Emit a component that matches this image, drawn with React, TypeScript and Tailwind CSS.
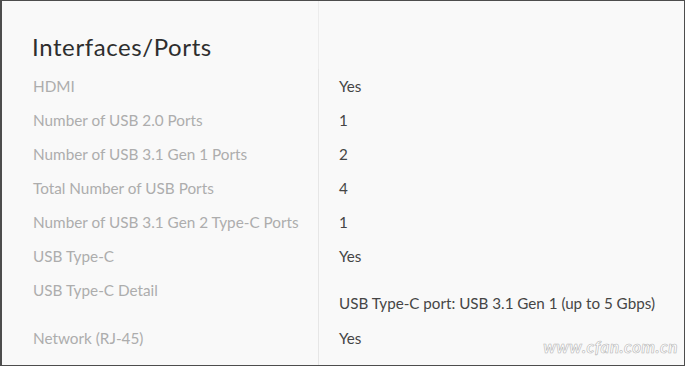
import React from 'react';

type Spec = { label: string; value: string; tall?: boolean };

const specs: Spec[] = [
  { label: 'HDMI', value: 'Yes' },
  { label: 'Number of USB 2.0 Ports', value: '1' },
  { label: 'Number of USB 3.1 Gen 1 Ports', value: '2' },
  { label: 'Total Number of USB Ports', value: '4' },
  { label: 'Number of USB 3.1 Gen 2 Type-C Ports', value: '1' },
  { label: 'USB Type-C', value: 'Yes' },
  { label: 'USB Type-C Detail', value: 'USB Type-C port: USB 3.1 Gen 1 (up to 5 Gbps)', tall: true },
  { label: 'Network (RJ-45)', value: 'Yes' },
];

const SpecRow: React.FC<{ spec: Spec }> = ({ spec }) => (
  <div className={`grid grid-cols-[317px_1fr] ${spec.tall ? 'h-[48px]' : 'h-[34px]'}`}>
    <div className="pl-[31px] border-r border-[#e6e6e6]">
      <div className="h-[34px] flex items-center text-[15.3px] text-[#adadad]">{spec.label}</div>
    </div>
    <div className={`pl-[20px] text-[15.2px] text-[#454545] ${spec.tall ? 'pt-[19px] leading-[22px]' : 'flex items-center'}`}>
      {spec.value}
    </div>
  </div>
);

export default function App() {
  return (
    <div
      className="relative w-[685px] h-[366px] bg-[#f9f9f9] border-t border-r border-b border-l-2 border-[#4d4d4d] overflow-hidden"
      style={{ fontFamily: 'Lato, "Noto Sans", sans-serif' }}
    >
      {/* Section heading */}
      <div className="grid grid-cols-[317px_1fr] h-[68px]">
        <div className="pl-[30px] pt-[30px] border-r border-[#ececec]">
          <h2 className="text-[24px] leading-[32px] text-[#2e2e2e] tracking-[0.6px]">Interfaces/Ports</h2>
        </div>
        <div />
      </div>

      {specs.map((s) => (
        <SpecRow key={s.label} spec={s} />
      ))}

      <div className="grid grid-cols-[317px_1fr] h-[20px]">
        <div className="border-r border-[#e6e6e6]" />
        <div />
      </div>

      {/* watermark */}
      <span
        className="absolute right-[6px] bottom-[6px] text-[17px] font-bold italic text-white tracking-[0.5px]"
        style={{ WebkitTextStroke: '0.6px #b5b5b5' }}
      >
        www.cfan.com.cn
      </span>
    </div>
  );
}
